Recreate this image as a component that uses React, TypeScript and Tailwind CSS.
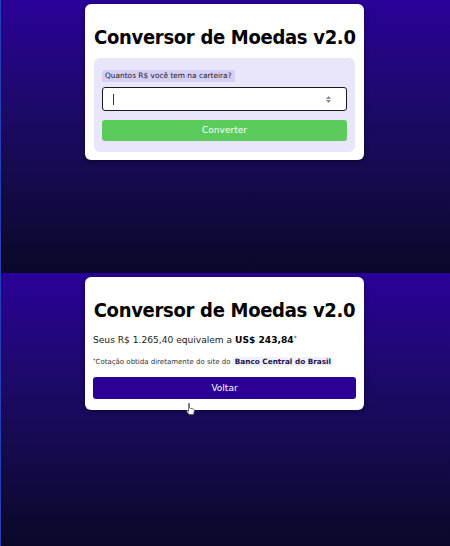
import React from "react";

const Panel = ({ children }: { children: React.ReactNode }) => (
  <div className="relative h-[273px] border-l border-[#2440b8] bg-gradient-to-b from-[#2a0098] to-[#0b0728] flex justify-center items-start">
    {children}
  </div>
);

const Title = () => (
  <h1 className="whitespace-nowrap text-[20px] font-bold text-black leading-[26px] text-center tracking-[-0.3px] font-['DejaVu_Sans_Condensed','DejaVu_Sans',sans-serif]">
    Conversor de Moedas v2.0
  </h1>
);

function App() {
  return (
    <div className="w-[450px] h-[546px] overflow-hidden bg-[#0a0624] font-['DejaVu_Sans',sans-serif]">
      <Panel>
        <div className="mt-[4px] mr-[2px] w-[279px] bg-white rounded-[6px] px-[9px] pt-[20px] pb-[8px] shadow-[0_1px_4px_rgba(0,0,0,0.5)]">
          <Title />
          <div className="mt-[8px] bg-[#e9e6fb] rounded-[6px] px-[8px] pt-[12px] pb-[11px]">
            <span className="block w-fit bg-[#d6cff6] rounded-[2px] px-[3px] text-[7.4px] leading-[12px] text-[#222]">
              Quantos R$ você tem na carteira?
            </span>
            <div className="mt-[5px] h-[24px] border-[1.5px] border-[#1a1a1a] rounded-[3px] bg-white flex items-center justify-between px-[10px]">
              <div className="w-px h-[11px] bg-[#333]" />
              <div className="flex flex-col items-center gap-[1px] mr-[5px]">
                <svg width="5" height="3" viewBox="0 0 5 3"><path d="M0 3 L2.5 0 L5 3Z" fill="#888" /></svg>
                <svg width="5" height="3" viewBox="0 0 5 3"><path d="M0 0 L2.5 3 L5 0Z" fill="#888" /></svg>
              </div>
            </div>
            <button className="block mt-[9px] w-full h-[21px] bg-[#5bcb5c] rounded-[3px] text-white text-[9px] leading-[21px]">
              Converter
            </button>
          </div>
        </div>
      </Panel>
      <Panel>
        <div className="mt-[4px] mr-[2px] w-[279px] bg-white rounded-[6px] px-[8px] pt-[20px] pb-[11px] shadow-[0_1px_4px_rgba(0,0,0,0.5)]">
          <Title />
          <p className="mt-[10px] text-[9.1px] leading-[14px] text-[#222]">
            Seus R$ 1.265,40 equivalem a <b className="text-black">US$ 243,84</b>
            <sup className="text-[6px]">*</sup>
          </p>
          <p className="mt-[9px] text-[7px] leading-[12px] text-[#333]">
            <sup className="text-[5px]">*</sup>Cotação obtida diretamente do site do{" "}
            <span className="font-bold text-[#1a1450] bg-[#f2f1fa] px-[2px] text-[7.3px]">
              Banco Central do Brasil
            </span>
          </p>
          <button className="block mt-[9px] w-full h-[22px] bg-[#2b0096] rounded-[3px] text-white text-[9px] leading-[22px]">
            Voltar
          </button>
        </div>
        {/* mouse pointer */}
        <svg className="absolute left-[185px] top-[130px]" width="9" height="12" viewBox="0 0 9 12">
          <path
            d="M2.5 0.5 L3.5 0.5 L3.5 5 L7.5 6 L8.5 7 L7.5 11.5 L3 11.5 L0.5 8 L1.5 7.5 L2.5 8.5 Z"
            fill="#fff"
            stroke="#555"
            strokeWidth="0.8"
          />
        </svg>
      </Panel>
    </div>
  );
}

export default App;
